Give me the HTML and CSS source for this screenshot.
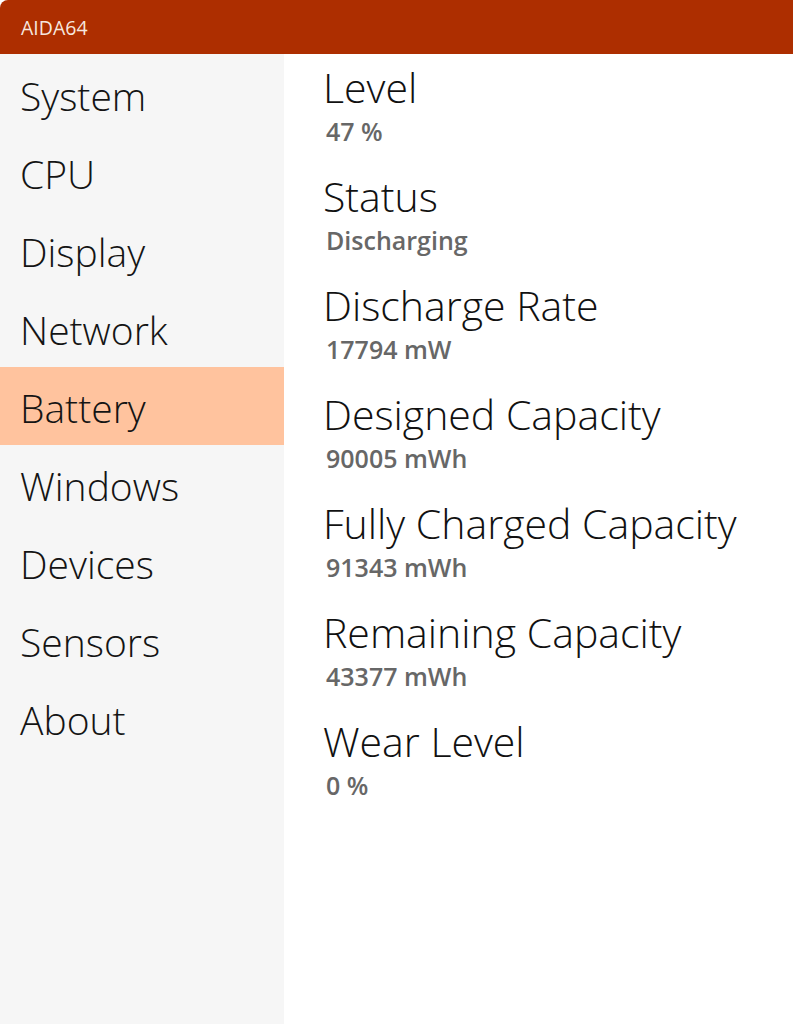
FILE: index.html
```html
<!DOCTYPE html>
<html>
<head>
<meta charset="utf-8">
<link rel="stylesheet" href="styles.css">
</head>
<body>
<div class="window">
  <header class="titlebar">AIDA64</header>
  <div class="main">
    <nav class="sidebar">
      <div class="nav-item">System</div>
      <div class="nav-item">CPU</div>
      <div class="nav-item">Display</div>
      <div class="nav-item">Network</div>
      <div class="nav-item active">Battery</div>
      <div class="nav-item">Windows</div>
      <div class="nav-item">Devices</div>
      <div class="nav-item">Sensors</div>
      <div class="nav-item">About</div>
    </nav>
    <section class="content">
      <div class="field"><div class="label">Level</div><div class="value">47 %</div></div>
      <div class="field"><div class="label">Status</div><div class="value">Discharging</div></div>
      <div class="field"><div class="label">Discharge Rate</div><div class="value">17794 mW</div></div>
      <div class="field"><div class="label">Designed Capacity</div><div class="value">90005 mWh</div></div>
      <div class="field"><div class="label">Fully Charged Capacity</div><div class="value">91343 mWh</div></div>
      <div class="field"><div class="label">Remaining Capacity</div><div class="value">43377 mWh</div></div>
      <div class="field"><div class="label">Wear Level</div><div class="value">0 %</div></div>
    </section>
  </div>
</div>
</body>
</html>
```

FILE: styles.css
```css
html, body {
  margin: 0;
  padding: 0;
  background: #ffffff;
}
.window {
  width: 793px;
  height: 1024px;
  display: flex;
  flex-direction: column;
  font-family: "Open Sans", "Noto Sans", sans-serif;
  overflow: hidden;
}
.titlebar {
  height: 54px;
  flex: none;
  background: #ad2e00;
  color: #f6e6df;
  font-size: 19.5px;
  line-height: 56px;
  padding-left: 21px;
  border-top-left-radius: 8px;
}
.main {
  flex: 1;
  display: flex;
}
.sidebar {
  width: 284px;
  flex: none;
  background: #f6f6f6;
  padding-top: 1px;
}
.nav-item {
  height: 75px;
  padding-top: 3px;
  line-height: 75px;
  padding-left: 20px;
  font-size: 39px;
  font-weight: 300;
  color: #141414;
}
.nav-item.active {
  background: #ffc39e;
}
.content {
  flex: 1;
  padding-left: 39px;
  padding-top: 9px;
}
.field {
  height: 109px;
}
.label {
  font-size: 41px;
  font-weight: 300;
  line-height: 48px;
  color: #111111;
}
.value {
  font-size: 25px;
  font-weight: 600;
  color: #676767;
  line-height: 30px;
  margin-top: 5px;
  padding-left: 3px;
}
```
